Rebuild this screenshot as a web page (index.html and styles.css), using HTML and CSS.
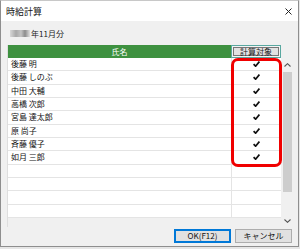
FILE: index.html
```html
<!DOCTYPE html>
<html lang="ja">
<head>
    <meta charset="UTF-8">
    <title>時給計算</title>
    <link rel="stylesheet" href="styles.css">
</head>
<body>
    <div class="window">
        <div class="titlebar">
            <span class="title">時給計算</span>
            <svg class="close" width="7" height="7" viewBox="0 0 7 7">
                <path d="M0.5 0.5 L6.5 6.5 M6.5 0.5 L0.5 6.5" stroke="#222" stroke-width="1"/>
            </svg>
        </div>
        <div class="content">
            <div class="period"><span class="blur"></span>年11月分</div>
            <div class="grid">
                <div class="table">
                    <div class="head">
                        <div class="h-name">氏名</div>
                        <div class="h-target"><span>計算対象</span></div>
                    </div>
                    <div class="row"><div class="name">後藤 明</div><div class="check"><svg width="7" height="6" viewBox="0 0 7 6"><path d="M0.6 3.2 L2.6 5.2 L6.4 0.6" fill="none" stroke="#111" stroke-width="1.7"/></svg></div></div>
                    <div class="row"><div class="name">後藤 しのぶ</div><div class="check"><svg width="7" height="6" viewBox="0 0 7 6"><path d="M0.6 3.2 L2.6 5.2 L6.4 0.6" fill="none" stroke="#111" stroke-width="1.7"/></svg></div></div>
                    <div class="row"><div class="name">中田 大輔</div><div class="check"><svg width="7" height="6" viewBox="0 0 7 6"><path d="M0.6 3.2 L2.6 5.2 L6.4 0.6" fill="none" stroke="#111" stroke-width="1.7"/></svg></div></div>
                    <div class="row"><div class="name">高橋 次郎</div><div class="check"><svg width="7" height="6" viewBox="0 0 7 6"><path d="M0.6 3.2 L2.6 5.2 L6.4 0.6" fill="none" stroke="#111" stroke-width="1.7"/></svg></div></div>
                    <div class="row"><div class="name">宮島 達太郎</div><div class="check"><svg width="7" height="6" viewBox="0 0 7 6"><path d="M0.6 3.2 L2.6 5.2 L6.4 0.6" fill="none" stroke="#111" stroke-width="1.7"/></svg></div></div>
                    <div class="row"><div class="name">原 尚子</div><div class="check"><svg width="7" height="6" viewBox="0 0 7 6"><path d="M0.6 3.2 L2.6 5.2 L6.4 0.6" fill="none" stroke="#111" stroke-width="1.7"/></svg></div></div>
                    <div class="row"><div class="name">斉藤 優子</div><div class="check"><svg width="7" height="6" viewBox="0 0 7 6"><path d="M0.6 3.2 L2.6 5.2 L6.4 0.6" fill="none" stroke="#111" stroke-width="1.7"/></svg></div></div>
                    <div class="row"><div class="name">如月 三郎</div><div class="check"><svg width="7" height="6" viewBox="0 0 7 6"><path d="M0.6 3.2 L2.6 5.2 L6.4 0.6" fill="none" stroke="#111" stroke-width="1.7"/></svg></div></div>
                    <div class="row"><div class="name"></div><div class="check"></div></div>
                    <div class="row"><div class="name"></div><div class="check"></div></div>
                    <div class="row"><div class="name"></div><div class="check"></div></div>
                    <div class="row"><div class="name"></div><div class="check"></div></div>
                    <div class="mark"></div>
                </div>
                <div class="scrollbar">
                    <div class="arrow">
                        <svg width="7" height="4" viewBox="0 0 7 4"><path d="M0.5 3.5 L3.5 0.7 L6.5 3.5" fill="none" stroke="#555" stroke-width="1.1"/></svg>
                    </div>
                    <div class="track"><div class="thumb"></div></div>
                    <div class="arrow">
                        <svg width="7" height="4" viewBox="0 0 7 4"><path d="M0.5 0.5 L3.5 3.3 L6.5 0.5" fill="none" stroke="#555" stroke-width="1.1"/></svg>
                    </div>
                </div>
            </div>
            <div class="buttons">
                <button class="btn default">OK(F12)</button>
                <button class="btn">キャンセル</button>
            </div>
        </div>
    </div>
</body>
</html>
```

FILE: styles.css
```css
body, html {
    margin: 0;
    padding: 0;
    width: 300px;
    height: 249px;
    background-color: #e6e6e6;
    font-family: 'Noto Sans CJK JP', 'Noto Sans', sans-serif;
    color: #000;
    overflow: hidden;
}

.window {
    width: 299px;
    height: 247px;
    box-sizing: border-box;
    border: 1px solid #8e8e8e;
    border-top-color: #c8c8c8;
    background-color: #f0f0f0;
    display: flex;
    flex-direction: column;
}

.titlebar {
    height: 20px;
    background-color: #fff;
    display: flex;
    align-items: center;
    justify-content: space-between;
    padding: 0 6px 0 5px;
}

.title {
    font-size: 9px;
    line-height: 9px;
    color: #111;
}

.close {
    display: block;
}

.content {
    flex: 1;
    display: flex;
    flex-direction: column;
    padding: 0 3px 0 6px;
}

.period {
    height: 24px;
    display: flex;
    align-items: center;
    padding-left: 3px;
    font-size: 8px;
    color: #222;
}

.blur {
    display: inline-block;
    width: 20px;
    height: 7px;
    margin-right: 1px;
    background: linear-gradient(90deg, #d8d8d8, #a8a8a8 30%, #c4c4c4 55%, #8c8c8c 75%, #e0e0e0);
    filter: blur(0.6px);
}

.grid {
    display: flex;
    height: 182px;
    border-left: 1px solid #dedede;
}

.table {
    position: relative;
    width: 273px;
    display: flex;
    flex-direction: column;
}

.head {
    display: flex;
    height: 13px;
}

.h-name {
    width: 223px;
    background-color: #3e9140;
    color: #fff;
    font-size: 8px;
    display: flex;
    align-items: center;
    justify-content: center;
}

.h-target {
    flex: 1;
    box-sizing: border-box;
    border: 1px solid #59a8a0;
    background-color: #f4f4f4;
    display: flex;
    align-items: center;
    justify-content: center;
    padding: 1px;
}

.h-target span {
    display: block;
    width: 100%;
    height: 100%;
    box-sizing: border-box;
    border: 1px solid #777;
    background-color: #e2e2e2;
    font-size: 8px;
    line-height: 8px;
    text-align: center;
    color: #222;
}

.row {
    display: flex;
    height: 13.33px;
    box-sizing: border-box;
    border-bottom: 1px solid #e4e4e4;
    background-color: #fff;
}

.name {
    width: 223px;
    box-sizing: border-box;
    padding-left: 3px;
    font-size: 8px;
    line-height: 12px;
    color: #111;
}

.check {
    flex: 1;
    border-left: 1px solid #e4e4e4;
    display: flex;
    align-items: center;
    justify-content: center;
}

.check svg {
    display: block;
}

.mark {
    position: absolute;
    left: 223px;
    top: 13px;
    width: 51px;
    height: 109px;
    box-sizing: border-box;
    border: 3px solid #f00000;
    border-radius: 7px;
}

.scrollbar {
    width: 13px;
    margin-top: 13px;
    height: 169px;
    display: flex;
    flex-direction: column;
    background-color: #f0f0f0;
}

.arrow {
    height: 13px;
    display: flex;
    align-items: center;
    justify-content: center;
}

.arrow svg {
    display: block;
}

.track {
    flex: 1;
    display: flex;
    padding: 1px 2px 0 2px;
}

.thumb {
    width: 100%;
    height: 120px;
    background-color: #cdcdcd;
}

.buttons {
    display: flex;
    justify-content: flex-end;
    gap: 4px;
    margin-top: 2px;
    padding-right: 3px;
}

.btn {
    width: 57px;
    height: 14px;
    padding: 0;
    margin: 0;
    box-sizing: border-box;
    border: 1px solid #adadad;
    background-color: #e1e1e1;
    font-family: 'Noto Sans CJK JP', 'Noto Sans', sans-serif;
    font-size: 8px;
    line-height: 12px;
    color: #111;
}

.btn.default {
    border: 1px solid #0078d7;
    box-shadow: inset 0 0 0 1px #0078d7;
}
```
